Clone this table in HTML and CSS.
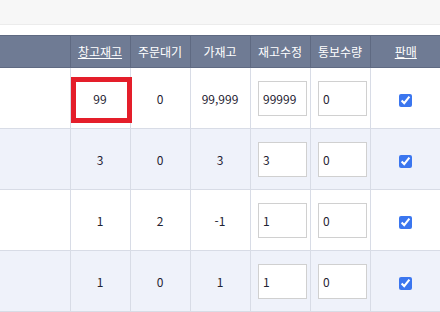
FILE: index.html
```html
<!DOCTYPE html>
<html lang="ko">
<head>
<meta charset="utf-8">
<link rel="stylesheet" href="styles.css">
</head>
<body>
<div class="topbar"></div>
<div class="gap"></div>
<div class="wrap">
<table class="grid">
  <colgroup>
    <col class="c-first"><col class="c"><col class="c"><col class="c"><col class="c"><col class="c"><col class="c-last">
  </colgroup>
  <thead>
    <tr>
      <th></th>
      <th><a class="link">창고재고</a></th>
      <th>주문대기</th>
      <th>가재고</th>
      <th>재고수정</th>
      <th>통보수량</th>
      <th><a class="link">판매</a></th>
    </tr>
  </thead>
  <tbody>
    <tr>
      <td></td><td class="hl-cell">99<span class="highlight"></span></td><td>0</td><td>99,999</td>
      <td class="inp"><input class="qty" value="99999"></td><td class="inp"><input class="qty" value="0"></td>
      <td><input type="checkbox" class="chk" checked></td>
    </tr>
    <tr class="alt">
      <td></td><td>3</td><td>0</td><td>3</td>
      <td class="inp"><input class="qty" value="3"></td><td class="inp"><input class="qty" value="0"></td>
      <td><input type="checkbox" class="chk" checked></td>
    </tr>
    <tr>
      <td></td><td>1</td><td>2</td><td>-1</td>
      <td class="inp"><input class="qty" value="1"></td><td class="inp"><input class="qty" value="0"></td>
      <td><input type="checkbox" class="chk" checked></td>
    </tr>
    <tr class="alt">
      <td></td><td>1</td><td>0</td><td>1</td>
      <td class="inp"><input class="qty" value="1"></td><td class="inp"><input class="qty" value="0"></td>
      <td><input type="checkbox" class="chk" checked></td>
    </tr>
  </tbody>
</table>
</div>
</body>
</html>
```
FILE: styles.css
```css
html, body {
  margin: 0;
  padding: 0;
  background: #fff;
  overflow: hidden;
  font-family: "Noto Sans CJK KR", "Noto Sans", sans-serif;
}
.topbar {
  height: 24px;
  background: #f7f7f7;
  border-bottom: 1px solid #ececec;
}
.gap {
  height: 10px;
}
.wrap {
  width: 460px;
}
.grid {
  border-collapse: collapse;
  table-layout: fixed;
  width: 441px;
}
.c-first { width: 70px; }
.c { width: 60px; }
.c-last { width: 71px; }
.grid th {
  height: 31px;
  padding: 0;
  background: #6f7b94;
  color: #fff;
  font-weight: normal;
  font-size: 12px;
  text-align: center;
  border: 1px solid #5f6a82;
  border-left: 0;
}
.grid th:last-child { border-right: 0; }
.link {
  color: #fff;
  text-decoration: underline;
}
.grid td {
  height: 60px;
  padding: 0;
  text-align: center;
  font-size: 12px;
  color: #1f2333;
  border: 1px solid #d8dce6;
  border-top: 0;
  border-left: 0;
}
.grid td:last-child { border-right: 0; }
.alt td { background: #eff2fa; }
.inp {
  text-align: left;
}
.qty {
  box-sizing: border-box;
  width: 49px;
  height: 35px;
  margin-left: 5px;
  padding: 0 0 0 4px;
  border: 1px solid #d0d0d0;
  border-radius: 0;
  background: #fff;
  font-family: "Noto Sans CJK KR", "Noto Sans", sans-serif;
  font-size: 12px;
  color: #1f2333;
  outline: none;
}
.chk {
  width: 13px;
  height: 13px;
  margin: 0;
  accent-color: #3b76ef;
  vertical-align: middle;
}
.hl-cell {
  position: relative;
}
.highlight {
  position: absolute;
  left: 0;
  top: 9px;
  width: 61px;
  height: 46px;
  box-sizing: border-box;
  border: 5px solid #e41e2a;
}
```
